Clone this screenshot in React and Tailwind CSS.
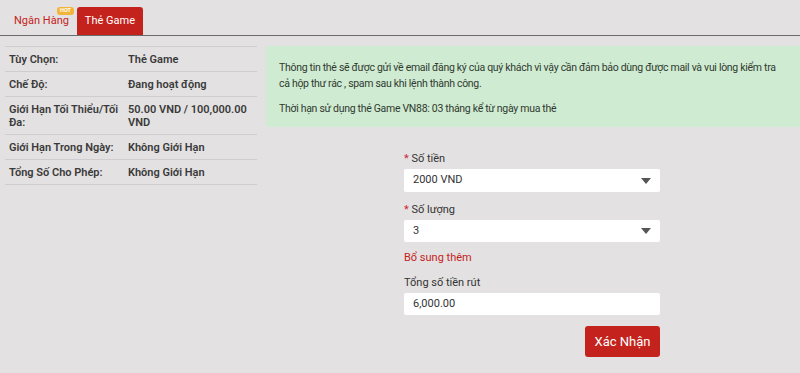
export default function App() {
  const rows = [
    ["Tùy Chọn:", "Thẻ Game"],
    ["Chế Độ:", "Đang hoạt động"],
    ["Giới Hạn Tối Thiểu/Tối Đa:", "50.00 VND / 100,000.00 VND"],
    ["Giới Hạn Trong Ngày:", "Không Giới Hạn"],
    ["Tổng Số Cho Phép:", "Không Giới Hạn"],
  ];
  const Caret = () => (
    <svg width="10" height="6" viewBox="0 0 10 6" className="text-[#555]">
      <path d="M0 0h10L5 6z" fill="currentColor" />
    </svg>
  );
  return (
    <div
      className="w-[800px] h-[373px] bg-[#e3e1e1] text-[#333] overflow-hidden"
      style={{ fontFamily: 'Roboto, "Liberation Sans", Arial, sans-serif' }}
    >
      <div className="flex items-end h-[36px] border-b border-[#6b6b6b] pl-[8px]">
        <div className="relative h-[28px] flex items-center px-[6px] text-[11px] text-[#c4231d]">
          Ngân Hàng
          <span className="absolute right-[1px] top-[0px] bg-[#f3b43a] text-white text-[5.5px] font-bold leading-none px-[3px] py-[1px] rounded-[3px]">HOT</span>
        </div>
        <div className="ml-[2px] h-[28px] w-[66px] flex items-center justify-center bg-[#c4231d] text-white text-[11px] rounded-t-[3px]">
          Thẻ Game
        </div>
      </div>
      <div className="flex pt-[10px]">
        <div className="w-[252px] ml-[5px] border-t border-[#cfcdcd]">
          {rows.map(([a, b], i) => (
            <div key={i} className="flex border-b border-[#cfcdcd] py-[5.5px] text-[11px] leading-[13px] font-semibold text-[#3a3a3a]">
              <div className="w-[123px] pl-[4px] pr-[4px]">{a}</div>
              <div className="flex-1 pr-[4px]">{b}</div>
            </div>
          ))}
        </div>
        <div className="flex-1 ml-[9px]">
          <div className="bg-[#cfebd2] h-[81px] pl-[13px] pr-[20px] pt-[14px] text-[10.5px] tracking-[-0.3px] leading-[16px] text-[#2f3a30]">
            <p>Thông tin thẻ sẽ được gửi về email đăng ký của quý khách vì vậy cần đảm bảo dùng được mail và vui lòng kiểm tra cả hộp thư rác , spam sau khi lệnh thành công.</p>
            <p className="mt-[9px]">Thời hạn sử dụng thẻ Game VN88: 03 tháng kể từ ngày mua thẻ</p>
          </div>
          <div className="ml-[138px] w-[256px] mt-[25px] text-[11px]">
            <div className="leading-[13px] mb-[4px]"><span className="text-[#d0243c]">*</span> Số tiền</div>
            <div className="h-[23px] bg-white flex items-center justify-between px-[9px] rounded-[2px]">
              <span>2000 VND</span><Caret />
            </div>
            <div className="leading-[13px] mt-[11px] mb-[4px]"><span className="text-[#d0243c]">*</span> Số lượng</div>
            <div className="h-[22px] bg-white flex items-center justify-between px-[9px] rounded-[2px]">
              <span>3</span><Caret />
            </div>
            <div className="leading-[13px] mt-[9px] text-[#c4231d]">Bổ sung thêm</div>
            <div className="leading-[13px] mt-[12px] mb-[4px]">Tổng số tiền rút</div>
            <div className="h-[22px] bg-white flex items-center px-[9px] rounded-[2px]">6,000.00</div>
            <div className="flex justify-end mt-[11px]">
              <button className="w-[75px] h-[31px] bg-[#c4231d] text-white text-[13px] rounded-[3px]">Xác Nhận</button>
            </div>
          </div>
        </div>
      </div>
    </div>
  );
}
